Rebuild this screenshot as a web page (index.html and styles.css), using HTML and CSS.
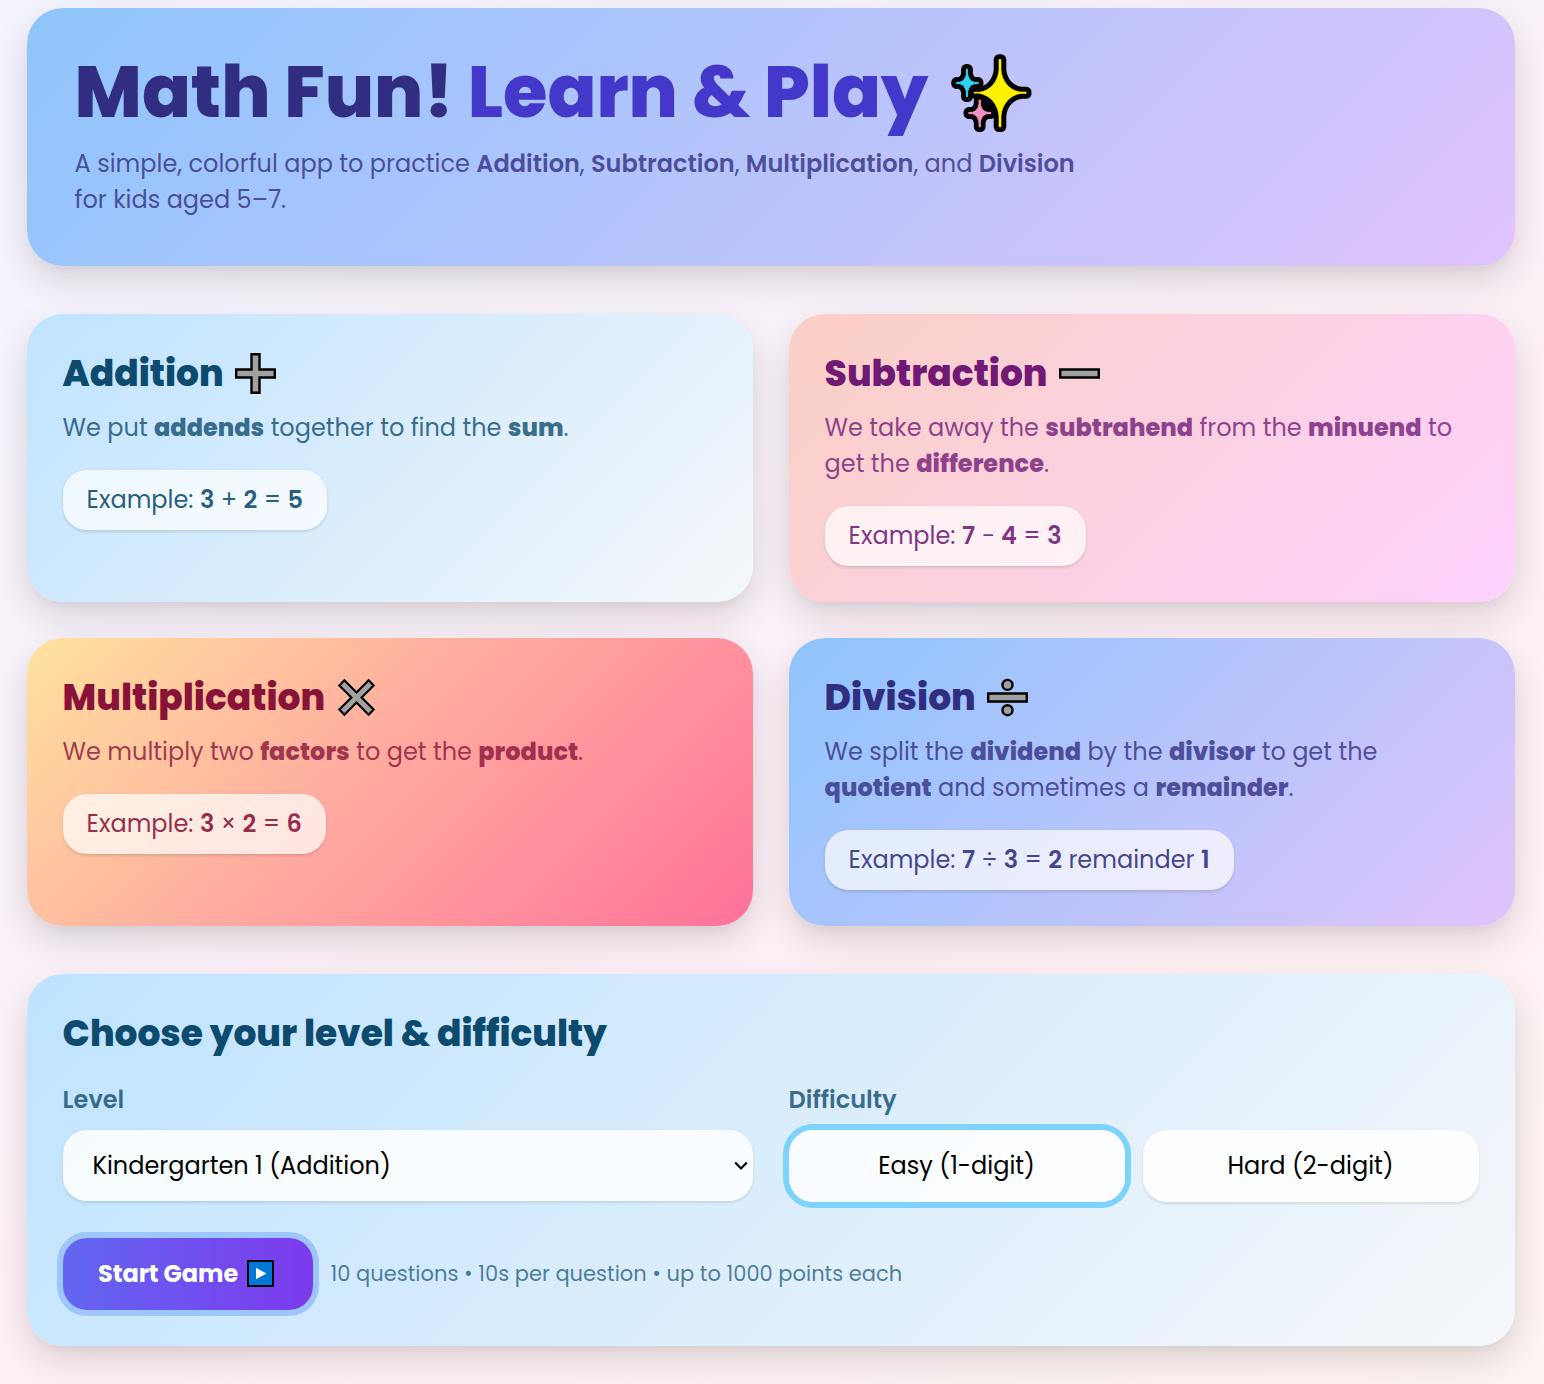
FILE: index.html
```html
<!DOCTYPE html>
<html lang="en">
<head>
<meta charset="utf-8">
<title>Math Fun! Learn &amp; Play</title>
<link rel="stylesheet" href="styles.css">
</head>
<body>
<main class="page">
  <header class="hero violet">
    <h1 class="hero-title"><span>Math Fun! <span class="accent">Learn &amp; Play</span></span>
      <svg class="sparkles" viewBox="0 0 84 84" aria-hidden="true">
        <defs>
          <path id="star-large" d="M50 9.500V20C49 32 41 41 30 42.200H25V43.200H30C41 45 49 54 50 66V76.800H52V66C53 54 61 45 72 43.400H77.200V42H72C61 41 53 32 52 20V9.500Z"/>
          <path id="star-blue" d="M17.400 19.200V24Q16.500 30.500 11 32.300L7.500 32.400V33.600L11 33.700Q16.500 35.500 17.400 42V46.800H18.600V42Q19.500 35.500 25 33.700L29.200 33.600V32.400L25 32.300Q19.500 30.500 18.600 24V19.200Z"/>
          <path id="star-pink" d="M30.100 50V54Q29.200 60.500 23.700 62.300L19.800 62.400V63.600L23.700 63.700Q29.200 65.500 30.100 72V76.800H31.300V72Q32.200 65.500 37.700 63.700L41.800 63.600V62.400L37.700 62.300Q32.200 60.500 31.300 54V50Z"/>
        </defs>
        <g stroke="#000" stroke-width="10.6" stroke-linejoin="round"><use href="#star-large"/><use href="#star-blue"/><use href="#star-pink"/></g>
        <path d="M35 50L48 50L48 68L38 62Z"/>
        <use href="#star-blue" fill="#31d2f7" stroke="#31d2f7"/><use href="#star-pink" fill="#f692c2" stroke="#f692c2"/><use href="#star-large" fill="#fff200" stroke="#fff200" stroke-width=".6"/>
      </svg>
    </h1>
    <p class="hero-text">A simple, colorful app to practice <strong>Addition</strong>, <strong>Subtraction</strong>, <strong>Multiplication</strong>, and <strong>Division</strong> for kids aged 5–7.</p>
  </header>

  <section class="cards">
    <article class="card sky">
      <h2>Addition<svg class="op" viewBox="0 0 41 41"><path d="M16.5 1.2h8v15.3h15.3v8H24.5v15.3h-8V24.5H1.2v-8h15.3z"/></svg></h2>
      <p>We put <b>addends</b> together to find the <b>sum</b>.</p>
      <div class="example">Example: <strong>3</strong> + <strong>2</strong> = <strong>5</strong></div>
    </article>
    <article class="card pink">
      <h2>Subtraction<svg class="op" viewBox="0 0 41 41"><path d="M1.2 16.5h38.6v8H1.2z"/></svg></h2>
      <p>We take away the <b>subtrahend</b> from the <b>minuend</b> to get the <b>difference</b>.</p>
      <div class="example">Example: <strong>7</strong> − <strong>4</strong> = <strong>3</strong></div>
    </article>
    <article class="card sunset">
      <h2>Multiplication<svg class="op" viewBox="0 0 41 41"><path d="M16.5 -2.5h8v19h19v8h-19v19h-8v-19h-19v-8h19z" transform="translate(20.5 20.5) rotate(45) scale(.9) translate(-20.5 -20.5)"/></svg></h2>
      <p>We multiply two <b>factors</b> to get the <b>product</b>.</p>
      <div class="example">Example: <strong>3</strong> × <strong>2</strong> = <strong>6</strong></div>
    </article>
    <article class="card violet">
      <h2>Division<svg class="op" viewBox="0 0 41 41"><path d="M1.2 16.5h38.6v8H1.2z"/><circle cx="20.5" cy="7.9" r="5"/><circle cx="20.5" cy="33.2" r="5"/></svg></h2>
      <p>We split the <b>dividend</b> by the <b>divisor</b> to get the <b>quotient</b> and sometimes a <b>remainder</b>.</p>
      <div class="example">Example: <strong>7</strong> ÷ <strong>3</strong> = <strong>2</strong> remainder <strong>1</strong></div>
    </article>
  </section>

  <section class="card sky setup">
    <h2>Choose your level &amp; difficulty</h2>
    <div class="fields">
      <div class="field">
        <div class="label">Level</div>
        <div class="control select">Kindergarten 1 (Addition)<svg class="chevron" viewBox="0 0 14 10"><path d="M1.2 1.5L7 7.5L12.8 1.5"/></svg></div>
      </div>
      <div class="field">
        <div class="label">Difficulty</div>
        <div class="choices">
          <button class="control selected">Easy (1-digit)</button>
          <button class="control">Hard (2-digit)</button>
        </div>
      </div>
    </div>
    <div class="start-row">
      <button class="start">Start Game<svg class="play" viewBox="0 0 27 27"><rect x="1" y="1" width="25" height="25" fill="#0078d7" stroke="#000" stroke-width="2"/><path d="M9 7.8L19.5 13.5L9 19.3Z" fill="#fff"/></svg></button>
      <span class="note">10 questions • 10s per question • up to 1000 points each</span>
    </div>
  </section>
</main>
</body>
</html>
```
FILE: styles.css
```css
* { box-sizing: border-box; }
body {
  margin: 0;
  font: 24px/36px Poppins, Inter, sans-serif;
  background: linear-gradient(150deg, #f4f4fe, #fdf0f6 60%, #fef4f1);
}
h1, h2, p { margin: 0; }
button { font: inherit; color: #000; border: 0; padding: 0; }
strong { font-weight: 600; }
b { font-weight: 800; }

.page { min-height: 1384px; padding: 8px 29.4px 38px 26.6px; }

.hero, .card {
  border-radius: 36px;
  box-shadow: 0 15px 37px rgba(0, 0, 0, .13), 0 6px 14px -4px rgba(0, 0, 0, .06);
}
.hero { height: 258px; padding: 48px; }
.hero-title {
  display: flex;
  align-items: center;
  gap: 21px;
  height: 72px;
  font-size: 72px;
  line-height: 72px;
  font-weight: 800;
  white-space: nowrap;
}
.accent { color: #4338ca; }
.sparkles { width: 84px; height: 84px; flex: none; }
.hero-text { max-width: 1008px; margin-top: 18px; color: rgba(49, 46, 129, .8); }

.cards { display: grid; grid-template-columns: 1fr 1fr; gap: 36px; margin: 48px 0; }
.card { padding: 36px; }
.cards .card { height: 288px; }
h2 {
  display: flex;
  align-items: center;
  gap: 11px;
  height: 48px;
  font-size: 36px;
  line-height: 48px;
  font-weight: 800;
}
.op { width: 41px; height: 41px; margin-top: -1px; fill: #a0a0a0; stroke: #000; stroke-width: 2.4; overflow: visible; }
.card p { margin-top: 12px; color: rgb(var(--ink) / .8); }
.example {
  display: inline-block;
  margin-top: 24px;
  padding: 12px 24px;
  border-radius: 24px;
  background: rgba(255, 255, 255, .7);
  box-shadow: 0 1.5px 3px rgba(0, 0, 0, .12);
  color: rgb(var(--ink) / .9);
}

.sky { --ink: 12 74 110; color: #0c4a6e; background: linear-gradient(135deg, #bfe3ff, #f5f7fa); }
.pink { --ink: 112 26 117; color: #701a75; background: linear-gradient(135deg, #fad0c4, #ffd1ff); }
.sunset { --ink: 136 19 55; color: #881337; background: linear-gradient(135deg, #ffe29f, #ffa99f 48%, #ff719a); }
.violet { --ink: 49 46 129; color: #312e81; background: linear-gradient(135deg, #8ec5fc, #e0c3fc); }

.setup { height: 372px; }
.fields { display: grid; grid-template-columns: 1fr 1fr; gap: 36px; margin-top: 24px; }
.label { margin-bottom: 12px; font-weight: 600; color: rgb(var(--ink) / .8); }
.control {
  height: 72px;
  border-radius: 24px;
  background: rgba(255, 255, 255, .85);
  box-shadow: 0 1.5px 3px rgba(0, 0, 0, .1);
  color: #000;
}
.select { display: flex; align-items: center; justify-content: space-between; height: 71px; padding: 0 5px 0 30px; }
.chevron { width: 14px; height: 10px; fill: none; stroke: #000; stroke-width: 2.2; }
.choices { display: grid; grid-template-columns: 1fr 1fr; gap: 18px; }
.selected { box-shadow: 0 0 0 6px #7dd3fc; }
.start-row { display: flex; align-items: center; gap: 18px; margin-top: 36px; }
.start {
  display: flex;
  align-items: center;
  justify-content: space-between;
  width: 250px;
  height: 72px;
  padding: 0 39px 0 35.4px;
  border-radius: 24px;
  color: #fff;
  font-weight: 700;
  letter-spacing: -.05px;
  background: linear-gradient(90deg, #6366f1, #7c3aed);
  box-shadow: 0 0 0 6px #9dc6fc;
}
.play { width: 27px; height: 27px; margin-top: -1px; flex: none; }
.note { font-size: 21px; color: rgb(var(--ink) / .7); }
```
